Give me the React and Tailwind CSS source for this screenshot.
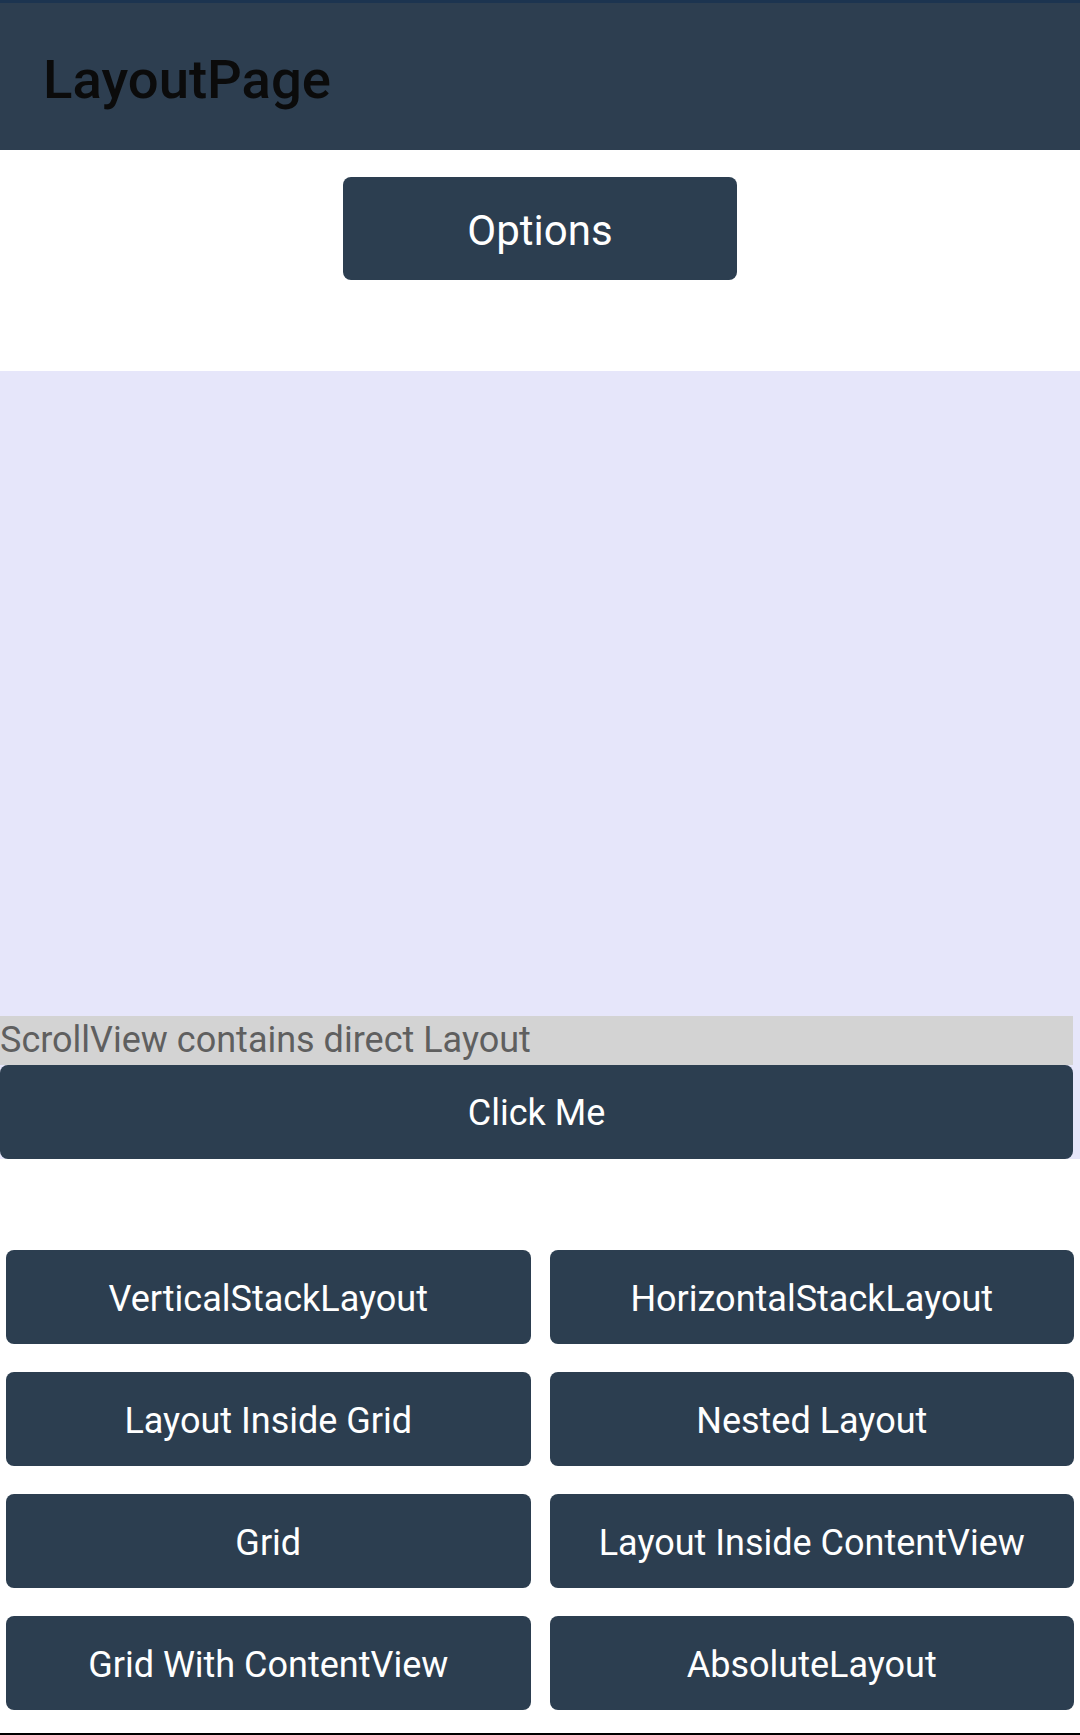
const gridButtons = [
  'VerticalStackLayout',
  'HorizontalStackLayout',
  'Layout Inside Grid',
  'Nested Layout',
  'Grid',
  'Layout Inside ContentView',
  'Grid With ContentView',
  'AbsoluteLayout',
];

export default function App() {
  return (
    <div className="w-[1080px] h-[1735px] bg-white flex flex-col font-['Roboto','Liberation_Sans',sans-serif]">
      {/* Toolbar */}
      <div className="h-[150px] shrink-0 border-t-[3px] border-[#1c3450] bg-[#2d3e50] pl-[43px] pt-[44px]">
        <h1 className="text-[54.5px] leading-[64px] font-medium text-[#0b0b0b]">LayoutPage</h1>
      </div>

      <button className="mt-[27px] self-center w-[394px] h-[103px] rounded-[8px] bg-[#2c3e50] text-white text-[42px] pt-[3px]">
        Options
      </button>

      {/* ScrollView */}
      <div className="mt-[91px] h-[788px] shrink-0 bg-[#e6e6fa] flex flex-col justify-end">
        <div className="w-[1073px] h-[49px] bg-[#d3d3d3] text-[#5f5f5f] text-[36px] leading-[49px] whitespace-nowrap">
          ScrollView contains direct Layout
        </div>
        <button className="w-[1073px] h-[94px] rounded-[8px] bg-[#2c3e50] text-white text-[36px] pt-[2px]">
          Click Me
        </button>
      </div>

      {/* Navigation buttons */}
      <div className="mt-[91px] pl-[6px] pr-[6px] grid grid-cols-2 gap-x-[19px] gap-y-[28px]">
        {gridButtons.map((label) => (
          <button
            key={label}
            className="h-[94px] rounded-[8px] bg-[#2c3e50] text-white text-[36px] pt-[3px] whitespace-nowrap"
          >
            {label}
          </button>
        ))}
      </div>

      <div className="flex-1" />
      <div className="h-[2px] bg-black shrink-0" />
    </div>
  );
}
